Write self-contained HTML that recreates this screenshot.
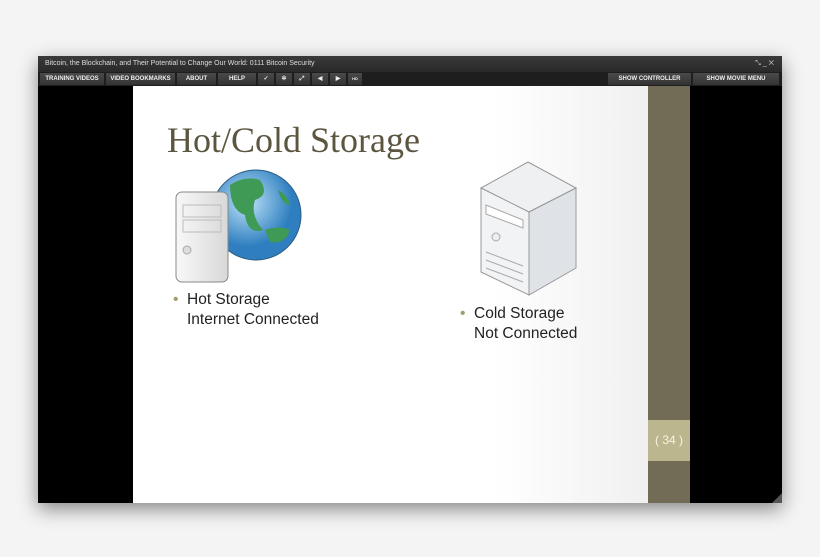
<!DOCTYPE html>
<html><head><meta charset="utf-8"><style>
body{margin:0;width:820px;height:557px;background:#f4f4f4;position:relative;overflow:hidden;font-family:"Liberation Sans",sans-serif}
.win{position:absolute;left:38px;top:56px;width:744px;height:447px;background:#000;box-shadow:0 6px 18px rgba(0,0,0,.45)}
.title{position:absolute;left:0;top:0;width:744px;height:16px;background:linear-gradient(#3a3a3a,#2a2a2a);color:#ddd;font-size:7px;line-height:16px;padding-left:7px;box-sizing:border-box}
.tb{position:absolute;left:0;top:16px;width:744px;height:14px;background:#1e1e1e}
.b{position:absolute;top:1px;height:12px;background:linear-gradient(#4a4a4a,#333);color:#eee;font-size:6px;line-height:12px;text-align:center;font-weight:bold}
.slide{position:absolute;left:95px;top:30px;width:515px;height:417px;background:linear-gradient(90deg,#fff 70%,#f0f0f0)}
.strip{position:absolute;left:610px;top:30px;width:42px;height:417px;background:#726b56}
.pg{position:absolute;left:610px;top:364px;width:42px;height:41px;background:#bcb68f;color:#f6f3e6;font-size:12px;text-align:center;line-height:41px}
h1{position:absolute;left:167px;top:118px;margin:0;font-family:"Liberation Serif",serif;font-weight:normal;font-size:36px;line-height:44px;color:#5c5640;white-space:nowrap}
.t{position:absolute;font-size:15.5px;color:#222;line-height:20px;white-space:nowrap}
.t i{position:absolute;left:-14px;top:0;color:#a39b70;font-style:normal}
</style></head><body>
<div class="win">
<div class="title">Bitcoin, the Blockchain, and Their Potential to Change Our World: 0111 Bitcoin Security<span style="position:absolute;right:8px;color:#ccc">⤡ _ ✕</span></div>
<div class="tb">
<div class="b" style="left:2px;width:64px">TRAINING VIDEOS</div>
<div class="b" style="left:68px;width:69px">VIDEO BOOKMARKS</div>
<div class="b" style="left:139px;width:39px">ABOUT</div>
<div class="b" style="left:180px;width:38px">HELP</div>
<div class="b" style="left:220px;width:16px">✓</div>
<div class="b" style="left:238px;width:16px">✲</div>
<div class="b" style="left:256px;width:16px">⤢</div>
<div class="b" style="left:274px;width:16px">◀</div>
<div class="b" style="left:292px;width:16px">▶</div>
<div class="b" style="left:310px;width:14px;font-size:4px">HD</div>
<div class="b" style="left:570px;width:83px">SHOW CONTROLLER</div>
<div class="b" style="left:655px;width:86px">SHOW MOVIE MENU</div>
</div>
<div class="slide"></div>
<div class="strip"></div>
<div class="pg">( 34 )</div>
<div style="position:absolute;right:0;bottom:0;width:0;height:0;border-left:10px solid transparent;border-bottom:10px solid #555"></div>
</div>
<h1>Hot/Cold Storage</h1>
<svg style="position:absolute;left:170px;top:165px" width="135" height="125">
<defs><radialGradient id="g" cx="40%" cy="35%"><stop offset="0" stop-color="#bfe3f8"/><stop offset="1" stop-color="#2f7fc0"/></radialGradient>
<linearGradient id="s" x1="0" x2="1"><stop offset="0" stop-color="#f8f8f8"/><stop offset="1" stop-color="#d8d8d8"/></linearGradient></defs>
<circle cx="86" cy="50" r="45" fill="url(#g)" stroke="#2a5b80"/>
<path d="M60 20 q15-10 30-5 q10 15 -5 20 q-5 15 8 30 q-15 5 -18-15 q-15 -5 -15-30z" fill="#3e9a55"/>
<path d="M95 65 q15-5 25 0 q-5 15 -20 12z M108 25 q10 5 12 15 q-8 0 -12-15z" fill="#3e9a55"/>
<rect x="6" y="27" width="52" height="90" rx="6" fill="url(#s)" stroke="#888"/>
<rect x="13" y="40" width="38" height="12" fill="none" stroke="#bbb"/><rect x="13" y="55" width="38" height="12" fill="none" stroke="#bbb"/>
<circle cx="17" cy="85" r="4" fill="#ddd" stroke="#aaa"/>
</svg>
<svg style="position:absolute;left:478px;top:160px" width="105" height="140">
<polygon points="3,28 50,2 98,28 51,52" fill="#eef0f2" stroke="#999"/>
<polygon points="51,52 98,28 98,108 51,135" fill="#dfe2e6" stroke="#999"/>
<polygon points="3,28 51,52 51,135 3,112" fill="#f2f3f5" stroke="#999"/>
<polygon points="8,45 45,60 45,68 8,54" fill="#fff" stroke="#aaa"/>
<circle cx="18" cy="77" r="4" fill="#eee" stroke="#aaa"/>
<path d="M8 92 l37 14 M8 100 l37 14 M8 108 l37 14" stroke="#aaa"/>
</svg>
<div class="t" style="left:187px;top:290px"><i>•</i>Hot Storage<br>Internet Connected</div>
<div class="t" style="left:474px;top:304px"><i>•</i>Cold Storage<br>Not Connected</div>
</body></html>
